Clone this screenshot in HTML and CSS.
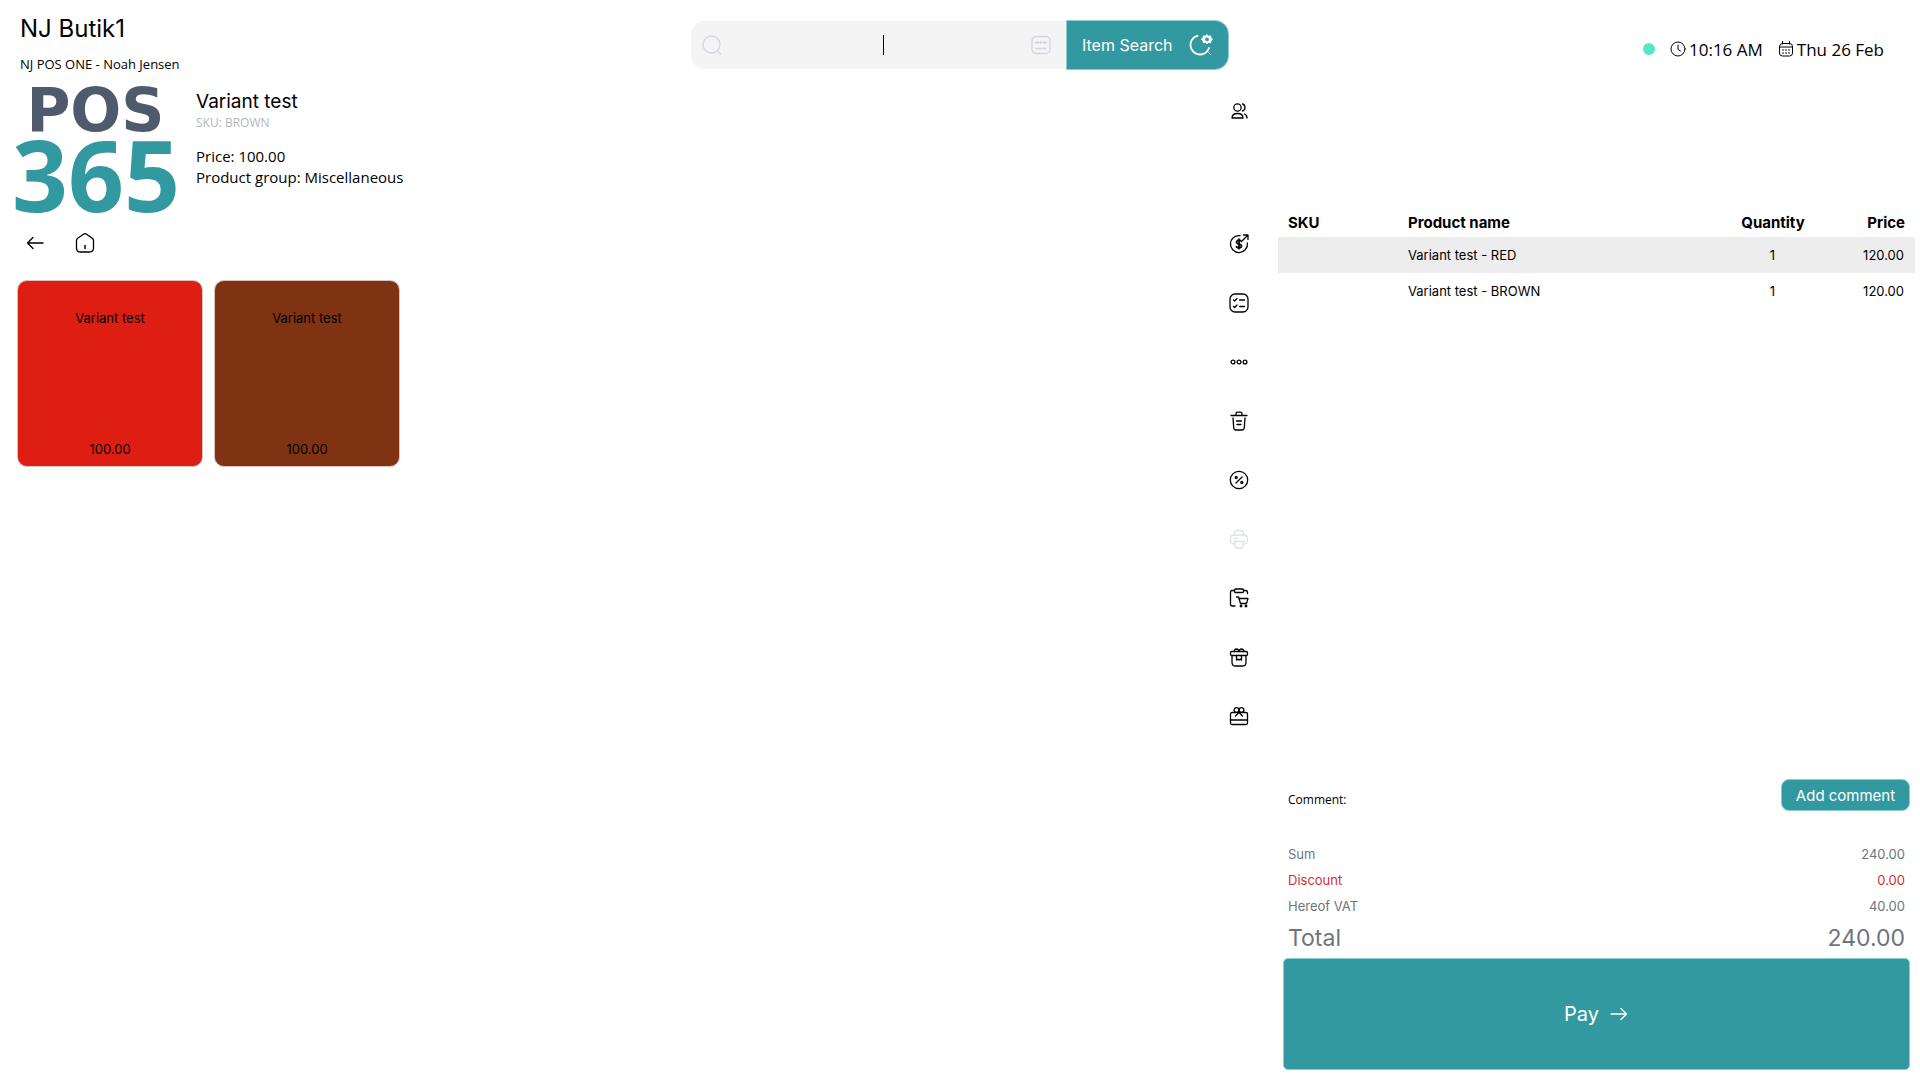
FILE: index.html
```html
<!DOCTYPE html>
<html lang="en">
<head>
    <meta charset="UTF-8">
    <meta name="viewport" content="width=device-width, initial-scale=1.0">
    <title>NJ Butik1</title>
    <link rel="stylesheet" href="styles.css">
</head>
<body>
    <header class="topo">
        <div class="loja">
            <h1>NJ Butik1</h1>
            <p>NJ POS ONE - Noah Jensen</p>
        </div>
        <form class="busca">
            <div class="campo">
                <svg class="icone cinza" viewBox="0 0 20 20"><circle cx="9.500" cy="9.500" r="8.500"/><path d="M16 16.500l2.500 2.500"/></svg>
                <div class="texto">
                    <input type="text" aria-label="Item Search">
                </div>
                <svg class="icone cinza" viewBox="0 0 20 20"><rect x="1" y="1.500" width="18" height="17" rx="4"/><path d="M4.500 7.500h3M8.500 7.500h2M12 7.500h3.500M5 13.500h10"/><path d="M6 6.500v2M9.500 6.500v2M13.500 6.500v2" stroke-width="1"/></svg>
            </div>
            <button type="button" class="buscar">
                Item Search
                <svg class="icone grande" viewBox="0 0 24 24"><path d="M8.500 2.800A9.500 9.500 0 1 0 20 15" stroke-width="1.800"/><path d="M19.500 19.500l2 2" stroke-width=".8"/><path d="M18 1.800l1.500 1.400 2-.3.600 2 1.400 1.400-1.400 1.500-.6 2-2-.4L18 10.800l-1.500-1.400-2 .4-.6-2-1.400-1.500 1.400-1.400.6-2 2 .3z" fill="#fff" stroke-width="1"/><circle cx="18" cy="6.300" r="1.900" fill="#3299a0" stroke="none"/></svg>
            </button>
        </form>
        <div class="status">
            <span class="online"></span>
            <span class="info"><svg class="icone mini" viewBox="0 0 16 16"><circle cx="8" cy="8" r="7"/><path d="M8 4v4.500l2.500 1.500"/></svg>10:16 AM</span>
            <span class="info"><svg class="icone mini" viewBox="0 0 16 16"><rect x="1.500" y="2.500" width="13" height="12.500" rx="3"/><path d="M1.500 6h13M4.500 .5v2.500M11.500 .5v2.500"/><path d="M4.500 9h1M7.500 9h1M10.500 9h1M4.500 12h1M7.500 12h1M10.500 12h1"/></svg>Thu 26 Feb</span>
        </div>
    </header>

    <div class="conteudo">
        <main class="catalogo">
            <section class="produto">
                <div class="logo"><span class="pos">POS</span><span class="num">365</span></div>
                <div class="detalhes">
                    <h2>Variant test</h2>
                    <p class="sku">SKU: BROWN</p>
                    <p>Price: 100.00</p>
                    <p>Product group: Miscellaneous</p>
                </div>
            </section>
            <nav class="caminho">
                <a href="#" aria-label="Back"><svg class="icone" viewBox="0 0 20 20"><path d="M18 10H2.500M8 4.500L2.500 10 8 15.500"/></svg></a>
                <a href="#" aria-label="Home"><svg class="icone" viewBox="0 0 20 20"><path d="M1.500 7.500Q1.500 6 3 5l5.500-3.800q1.500-1 3 0L17 5q1.500 1 1.500 2.500V15q0 4-4 4h-9q-4 0-4-4z"/><path d="M10 12.500v3" stroke-width="1.500"/></svg></a>
            </nav>
            <section class="variantes">
                <button type="button" class="variante vermelho"><span>Variant test</span><span>100.00</span></button>
                <button type="button" class="variante marrom"><span>Variant test</span><span>100.00</span></button>
            </section>
        </main>

        <nav class="ferramentas">
            <button type="button" class="cliente" aria-label="Customer"><svg class="icone" viewBox="0 0 20 20"><circle cx="8.500" cy="6.500" r="3.700"/><path d="M3 17q0-4.500 5.500-4.500T14 17z"/><path d="M13.500 3q2.500.7 2.500 3.500T13.500 10M15.500 13q2.500 1 2.500 4"/></svg></button>
            <button type="button" aria-label="Refund"><svg class="icone" viewBox="0 0 20 20"><path d="M11 1.600A8.500 8.500 0 1 0 18.400 9M13.500 6.500L18.500 1.500M14.500 1h4.500v4.500"/><path d="M12.500 7.500Q12 6.200 10 6.200T7.500 8q0 1.500 2.500 2t2.500 2q0 1.800-2.500 1.800T7.500 12.500M10 5.200v9.600" stroke-width="1.700"/></svg></button>
            <button type="button" aria-label="Orders"><svg class="icone" viewBox="0 0 20 20"><rect x="1" y="1" width="18" height="18" rx="5"/><path d="M4.500 7l1.200 1L8 5.500M4.500 13.500l1.200 1L8 12M10.500 7h5M10.500 13.500h5"/></svg></button>
            <button type="button" aria-label="More"><svg class="icone" viewBox="0 0 20 20"><circle cx="4" cy="10" r="1.900"/><circle cx="10" cy="10" r="1.900"/><circle cx="16" cy="10" r="1.900"/></svg></button>
            <button type="button" aria-label="Delete"><svg class="icone" viewBox="0 0 20 20"><path d="M2 4.500h16M7 4V2.800Q7 1.200 8.500 1.200h3Q13 1.200 13 2.800V4M4 7l.7 9.500q.2 2.500 2.300 2.500h6q2.100 0 2.300-2.500L16 7M7.500 10h5M8 13.500h4"/></svg></button>
            <button type="button" aria-label="Discount"><svg class="icone" viewBox="0 0 20 20"><circle cx="10" cy="10" r="8.700"/><path d="M13 7l-6 6"/><circle cx="7.200" cy="7.500" r="1"/><circle cx="12.800" cy="12.500" r="1"/></svg></button>
            <button type="button" aria-label="Print" disabled><svg class="icone" viewBox="0 0 20 20"><path d="M5.500 6V3.500q0-2 2-2h5q2 0 2 2V6M5.500 15Q1.500 15 1.500 11.500v-2Q1.500 6 5 6h10q3.500 0 3.500 3.500v2q0 3.500-4 3.500M5 9.500h3"/><path d="M4.500 12.500h11M6 12.500V17q0 2 2 2h4q2 0 2-2v-4.500"/></svg></button>
            <button type="button" aria-label="Park order"><svg class="icone" viewBox="0 0 20 20"><rect x="5.500" y="1" width="9" height="3.500" rx="1"/><path d="M5.500 2.500H3.500q-2 0-2 2V16q0 2 2 2H6M14.500 2.500h2q2 0 2 2v1M7.500 9h2l2 6.500h6L19 10.500h-9"/><circle cx="12" cy="18" r=".8"/><circle cx="17" cy="18" r=".8"/></svg></button>
            <button type="button" aria-label="Packages"><svg class="icone" viewBox="0 0 20 20"><rect x="1.500" y="4.500" width="17" height="4" rx="1.200"/><path d="M3 8.500V15q0 4 3 4h8q3 0 3-4V8.500M7.500 8.500v4.500q1.200-1.500 2.500 0 1.300-1.500 2.500 0V8.500M5 4.500Q5.500 2 7.500 2T10 4.500Q10.500 2 12.500 2T15 4.500"/></svg></button>
            <button type="button" aria-label="Gift card"><svg class="icone" viewBox="0 0 20 20"><rect x="1.500" y="6.500" width="17" height="12" rx="1.500"/><path d="M1.500 14h17M10 6.500l-3.500 3.500M10 6.500l3.500 3.500"/><circle cx="7.500" cy="4" r="2.400"/><circle cx="12.500" cy="4" r="2.400"/></svg></button>
        </nav>

        <aside class="pedido">
            <table>
                <thead>
                    <tr><th class="col-sku">SKU</th><th>Product name</th><th class="col-qtd">Quantity</th><th class="col-preco">Price</th></tr>
                </thead>
                <tbody>
                    <tr><td></td><td>Variant test - RED</td><td class="col-qtd">1</td><td class="col-preco">120.00</td></tr>
                    <tr><td></td><td>Variant test - BROWN</td><td class="col-qtd">1</td><td class="col-preco">120.00</td></tr>
                </tbody>
            </table>
            <div class="comentario">
                <p>Comment:</p>
                <button type="button">Add comment</button>
            </div>
            <dl class="resumo">
                <div><dt>Sum</dt><dd>240.00</dd></div>
                <div class="desconto"><dt>Discount</dt><dd>0.00</dd></div>
                <div><dt>Hereof VAT</dt><dd>40.00</dd></div>
                <div class="total"><dt>Total</dt><dd>240.00</dd></div>
            </dl>
            <button type="button" class="pagar">Pay <svg class="icone" viewBox="0 0 20 20"><path d="M2 10h15.500M12 4.500l5.500 5.500-5.500 5.500"/></svg></button>
        </aside>
    </div>
</body>
</html>
```
FILE: styles.css
```css
* {
    padding: 0px;
    margin: 0px;
    box-sizing: border-box;
}
:root {
    --verde: #3299a0;
    --borda: #8fcbce;
    --cinza: #6c757d;
    --texto: "Open Sans", "Noto Sans", sans-serif;
}
body {
    display: flex;
    flex-direction: column;
    min-height: 100vh;
    background-color: #fff;
    color: #000;
    font-family: Inter, sans-serif;
    font-size: 13px;
}
button {
    font-family: inherit;
    border: none;
    background: none;
    cursor: pointer;
}
.icone {
    display: block;
    flex: none;
    width: 20px;
    height: 20px;
    fill: none;
    stroke: currentColor;
    stroke-width: 1.3;
    stroke-linecap: round;
    stroke-linejoin: round;
}
.icone.cinza {
    color: #d0d5de;
}
.icone.grande {
    width: 24px;
    height: 24px;
}
.icone.mini {
    width: 16px;
    height: 16px;
    stroke-width: 1;
}

/* topo */
.topo {
    display: grid;
    grid-template-columns: 1fr 538px 1fr;
    height: 84px;
}
.loja {
    padding: 13px 20px 0px;
}
.loja h1 {
    font-size: 24px;
    font-weight: 400;
    line-height: 32px;
}
.loja p {
    margin-top: 9px;
    font-family: var(--texto);
    font-size: 13px;
    line-height: 20px;
}
.busca {
    display: flex;
    align-items: center;
    height: 52px;
    margin-top: 19px;
}
.campo {
    display: flex;
    flex: 1;
    align-items: center;
    height: 48px;
    padding: 0px 15px 0px 11px;
    background-color: #f4f4f4;
    border-radius: 14px 0px 0px 14px;
}
.texto {
    position: relative;
    flex: 1;
    margin-left: 12px;
}
.texto::after {
    content: "";
    position: absolute;
    top: 0px;
    left: 50%;
    width: 1px;
    height: 20px;
    background-color: #000;
}
.texto input {
    display: block;
    width: 100%;
    height: 20px;
    border: none;
    outline: none;
    background: none;
    text-align: center;
}
.buscar {
    display: flex;
    align-items: center;
    justify-content: space-between;
    width: 163px;
    height: 50px;
    padding: 0px 15px;
    background-color: var(--verde);
    border: 1px solid var(--borda);
    border-radius: 0px 14px 14px 0px;
    color: #fff;
    font-size: 16px;
}
.status {
    display: flex;
    align-items: center;
    justify-content: flex-end;
    gap: 15px;
    height: 98px;
    padding-right: 36px;
    font-family: var(--texto);
    font-size: 17px;
}
.online {
    width: 12px;
    height: 12px;
    border-radius: 50%;
    background-color: #56e8c4;
}
.info {
    display: flex;
    align-items: center;
    gap: 3px;
}

/* catalogo */
.conteudo {
    display: flex;
    flex: 1;
}
.catalogo {
    flex: 1;
    padding-left: 17px;
}
.produto {
    display: flex;
    gap: 17px;
    height: 132px;
    margin-left: -5px;
}
.logo {
    display: flex;
    flex-direction: column;
    width: 167px;
    white-space: nowrap;
}
.pos {
    color: #505a6d;
    font: 700 60px/52px "DejaVu Sans", sans-serif;
    text-align: center;
}
.num {
    color: var(--verde);
    font: 700 98px/76px "Noto Sans", sans-serif;
    text-align: center;
}
.detalhes {
    font-family: var(--texto);
    font-size: 15px;
    line-height: 21px;
}
.detalhes h2 {
    margin-top: 5px;
    font-family: Inter, sans-serif;
    font-size: 19px;
    font-weight: 400;
    line-height: 26px;
}
.detalhes .sku {
    margin-bottom: 15px;
    color: #b0b7c0;
    font-size: 12px;
    line-height: 16px;
}
.caminho {
    display: flex;
    gap: 30px;
    padding: 17px 8px;
}
.caminho a {
    color: #000;
}
.variantes {
    display: flex;
    gap: 11px;
    margin-top: 10px;
}
.variante {
    display: flex;
    flex-direction: column;
    align-items: center;
    justify-content: space-between;
    width: 186px;
    height: 187px;
    padding: 28px 8px 8px;
    border: 1px solid #d9c3bd;
    border-radius: 10px;
    font-size: 13px;
    line-height: 18px;
}
.vermelho {
    background-color: #df1e13;
}
.marrom {
    background-color: #7f3312;
}

/* ferramentas */
.ferramentas {
    display: flex;
    flex-direction: column;
    align-items: center;
    width: 78px;
    padding-top: 17px;
}
.ferramentas button {
    display: flex;
    align-items: center;
    justify-content: center;
    width: 40px;
    height: 19px;
    margin-bottom: 40px;
}
.ferramentas .cliente {
    margin-bottom: 114px;
}
.ferramentas button:disabled {
    color: #dfe3e8;
}

/* pedido */
.pedido {
    display: flex;
    flex-direction: column;
    width: 642px;
    padding: 124px 5px 10px 0px;
}
table {
    width: 100%;
    border-collapse: collapse;
}
th {
    height: 29px;
    padding: 0px 10px;
    font-size: 15px;
    font-weight: 700;
    text-align: left;
}
td {
    height: 36px;
    padding: 0px 11px 0px 10px;
}
tbody tr:nth-child(odd) {
    background-color: #ededed;
}
.col-sku {
    width: 120px;
}
.col-qtd {
    width: 104px;
    text-align: center;
}
.col-preco {
    width: 90px;
    text-align: right;
}
.comentario {
    display: flex;
    align-items: center;
    justify-content: space-between;
    margin-top: auto;
    padding: 0px 5px 0px 10px;
    font-family: var(--texto);
    font-size: 12px;
}
.comentario p {
    padding-top: 9px;
}
.comentario button {
    width: 129px;
    height: 32px;
    background-color: var(--verde);
    border: 1px solid var(--borda);
    border-radius: 8px;
    color: #fff;
    font-family: Inter, sans-serif;
    font-size: 15px;
}
.resumo {
    margin-top: 30px;
    padding: 0px 10px;
    color: var(--cinza);
    line-height: 26px;
}
.resumo div {
    display: flex;
    justify-content: space-between;
}
.resumo .desconto {
    color: #d22f2f;
}
.resumo .total {
    font-size: 23px;
    line-height: 39px;
}
.pagar {
    display: flex;
    align-items: center;
    justify-content: center;
    gap: 10px;
    height: 112px;
    margin: 0px 5px;
    background-color: var(--verde);
    border: 1px solid var(--borda);
    border-radius: 5px;
    color: #fff;
    font-size: 20px;
}
```
